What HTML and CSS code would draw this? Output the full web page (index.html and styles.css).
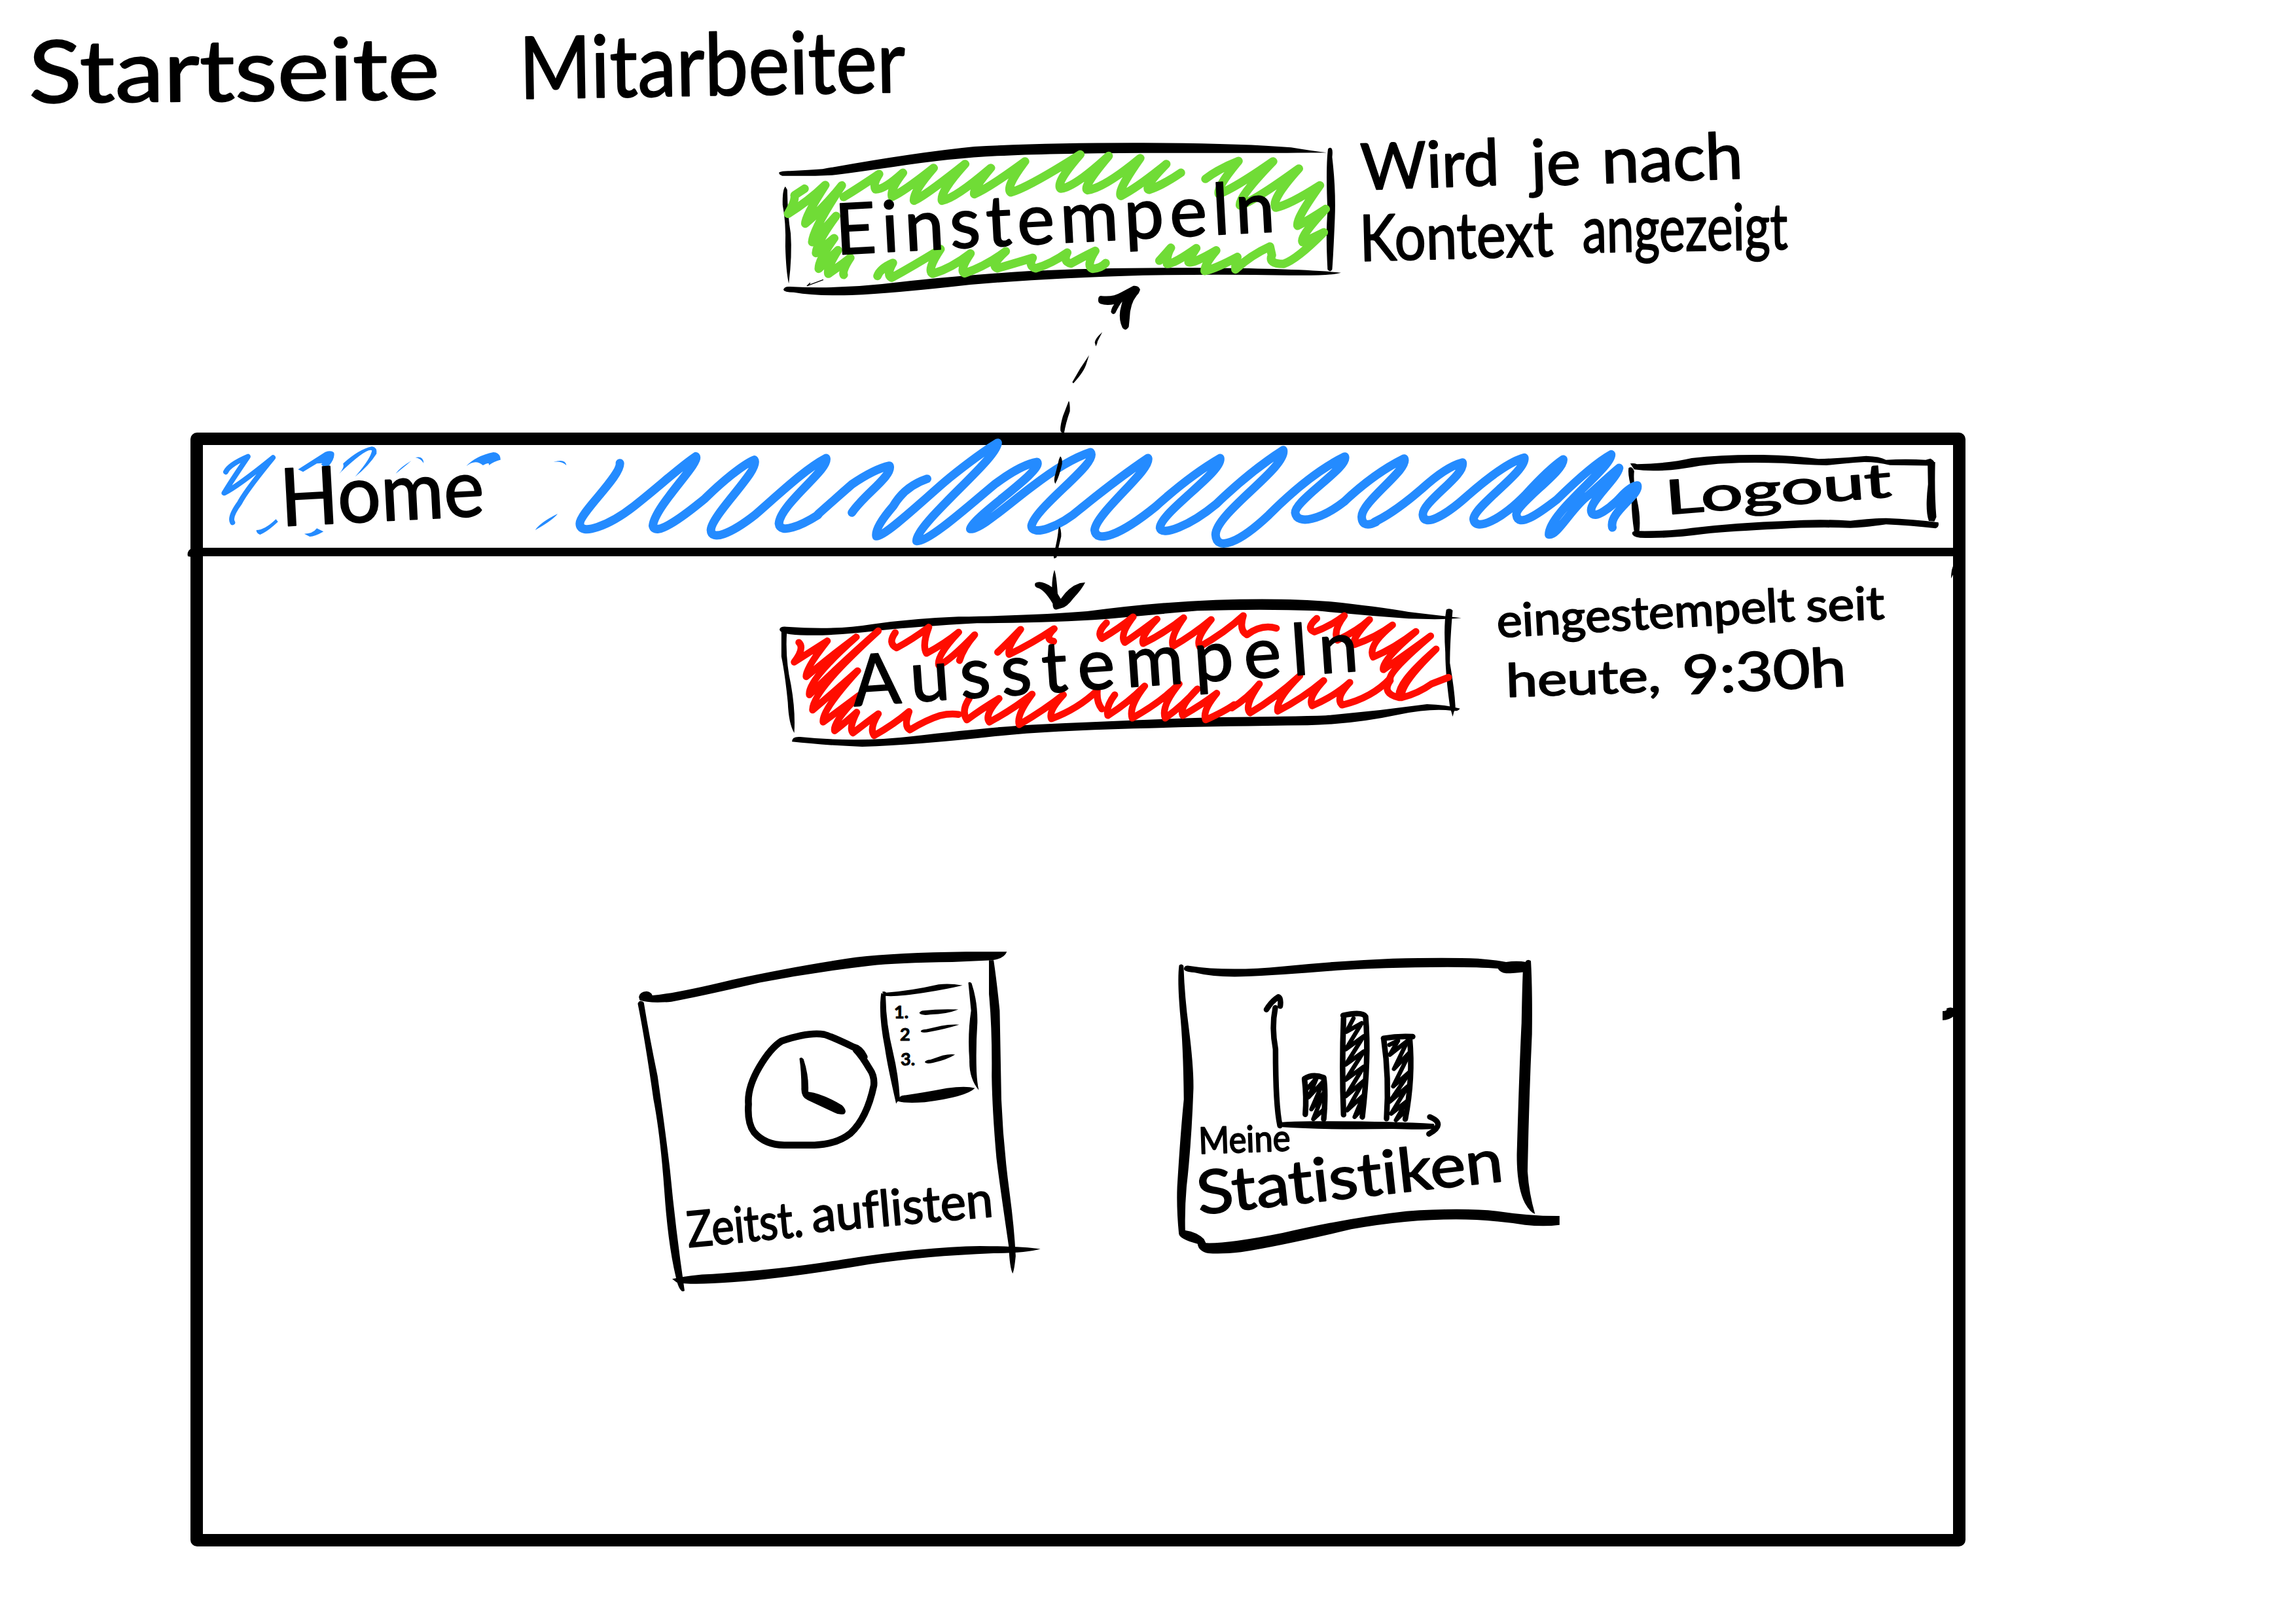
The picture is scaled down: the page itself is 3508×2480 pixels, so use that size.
FILE: index.html
```html
<!DOCTYPE html>
<html lang="de">
<head>
<meta charset="utf-8">
<title>Startseite Mitarbeiter</title>
<link rel="stylesheet" href="styles.css">
</head>
<body>
<main class="page">
  <h1 class="title">
    <svg class="art" viewBox="0 0 3508 190">
      <text class="t-title" transform="translate(44 157) rotate(-.5)" textLength="628" lengthAdjust="spacingAndGlyphs">Startseite</text>
      <text class="t-title" transform="translate(794 151) rotate(-1)" textLength="590" lengthAdjust="spacingAndGlyphs">Mitarbeiter</text>
    </svg>
  </h1>

  <section class="context">
    <button class="sketch-button clock-in">
      <svg class="art" viewBox="1160 190 880 300">
        <g transform="translate(1160 190) scale(.58673 .33333)">
          <path d="M52 220Q60 213 80 214Q130 210 165 205Q400 130 560 102Q750 84 1000 85Q1250 86 1385 106Q1440 122 1478 130Q1430 130 1375 131L1000 131Q750 133 620 145Q500 155 350 195Q230 225 190 233Q130 238 60 236Q50 230 52 220Z"/>
          <path d="M68 285Q60 300 61 370Q70 450 68 560Q70 680 77 730Q86 600 82 500Q74 420 73 300Z"/>
          <path d="M63 758Q65 742 80 744Q200 755 320 732Q500 695 700 673Q900 655 1140 658Q1400 660 1515 680Q1490 695 1380 692Q1200 686 1000 692Q750 705 550 735Q350 775 240 783Q150 788 90 770Q65 770 63 758Z"/>
          <path d="M1487 107Q1495 107 1492 150Q1502 300 1499 430Q1495 600 1492 665Q1487 680 1480 665Q1475 500 1480 400Q1475 200 1481 115Q1482 107 1487 107Z"/>
          <path class="line hair" d="M166 713L125 740L132 728"/>
          <g class="line green">
            <path d="M220 333Q260 290 312 228Q295 275 303 298Q325 300 374 222Q340 300 346 332Q375 310 454 200Q400 310 403 350Q430 330 536 182Q470 310 476 350Q510 340 603 200Q555 300 560 320Q600 290 692 170Q640 290 655 312Q700 290 836 138Q770 270 785 295Q820 290 910 145Q840 290 855 302Q900 290 992 155Q930 310 942 328Q985 290 1060 182Q1000 290 1015 300Q1050 280 1098 222"/>
            <path d="M1162 250Q1200 200 1248 168Q1190 290 1197 320Q1240 290 1338 170Q1245 340 1252 372Q1290 350 1405 203Q1330 350 1345 382Q1380 370 1460 280Q1395 440 1402 465Q1430 440 1475 388Q1405 520 1415 540Q1430 530 1470 495Q1400 620 1365 640Q1325 640 1335 600L1330 560Q1280 600 1240 665Q1240 620 1245 608Q1190 660 1160 672Q1160 640 1190 578Q1130 640 1118 632Q1125 600 1138 568Q1080 640 1062 640Q1060 600 1072 566Q1060 590 1042 625"/>
            <path d="M308 695Q315 660 348 635Q330 690 345 703Q400 650 472 572Q435 670 452 685Q500 660 550 592Q520 670 535 683Q590 650 642 582Q600 650 620 660Q660 640 712 612Q700 650 720 660Q760 640 802 588Q790 630 812 638Q840 610 875 580Q850 650 868 662Q890 660 902 636"/>
            <path d="M118 295L92 325Q95 350 75 410Q130 350 172 278Q120 420 120 455Q170 380 215 280Q140 480 138 540Q170 480 200 420Q150 540 148 590Q170 560 195 522Q155 620 155 662Q180 620 205 577Q175 660 180 685Q210 650 237 612Q215 670 220 690"/>
          </g>
        </g>
        <text class="t-button" transform="translate(1278 389) rotate(-3)" textLength="672">Einstempeln</text>
      </svg>
    </button>
    <p class="context-note">
      <svg class="art" viewBox="2040 190 760 300">
        <g class="t-note">
          <text transform="translate(2080 290) rotate(-2)" textLength="212" lengthAdjust="spacingAndGlyphs">Wird</text>
          <text transform="translate(2340 284) rotate(-2)" textLength="76" lengthAdjust="spacingAndGlyphs">je</text>
          <text transform="translate(2448 280) rotate(-2)" textLength="216" lengthAdjust="spacingAndGlyphs">nach</text>
          <text transform="translate(2078 399) rotate(-1.5)" textLength="296" lengthAdjust="spacingAndGlyphs">Kontext</text>
          <text transform="translate(2418 386) rotate(-1)" textLength="314" lengthAdjust="spacingAndGlyphs">angezeigt</text>
        </g>
      </svg>
    </p>
  </section>

  <section class="window">
    <header class="bar">
      <div class="bar-title">
        <svg class="art" viewBox="310 680 2160 157">
          <path d="M292 838Q285 843 287 850L292 851Z"/>
          <g transform="translate(280 640) scale(.63776 .33333)">
            <g class="blue">
              <path d="M275 232L340 152Q355 142 361 155Q365 185 342 230L330 208Q340 200 320 205L287 243Z"/>
              <path d="M383 205Q420 140 452 127Q465 130 463 160Q445 215 412 265Q450 180 452 145Q440 130 373 252Q387 225 383 205Z"/>
              <path d="M509 251Q520 222 546 193Q530 220 509 251Z"/>
              <path d="M556 177Q575 168 576 203Q568 180 556 177Z"/>
              <path d="M678 217Q700 170 743 153Q760 155 760 188Q745 195 732 213Q735 195 718 213Q700 182 678 217Z"/>
              <path d="M887 198Q915 180 918 213Q905 192 887 198Z"/>
              <path d="M843 510Q855 475 897 435Q885 465 843 510Z"/>
              <path d="M175 510Q195 510 222 460L227 472Q200 520 184 531Q175 525 175 510Z"/>
              <path d="M290 527Q310 527 320 502L336 517Q315 540 303 540Z"/>
            </g>
            <path class="line blue-line thin" d="M102 243Q110 210 155 173Q110 300 98 340Q130 310 215 178Q150 330 135 385Q110 450 118 475"/>
            <path class="line blue-line" d="M1046 203C1050 260 950 430 950 480C950 540 1020 490 1080 400C1140 310 1190 220 1228 172C1240 200 1130 400 1125 490C1130 540 1190 460 1250 365C1290 290 1340 210 1368 188C1385 230 1265 440 1264 510C1265 560 1310 530 1370 440C1430 340 1490 230 1540 180C1550 230 1430 390 1427 480C1430 530 1480 490 1521 440"/>
          </g>
          <g transform="translate(1250 640) scale(.57398 .33333)">
            <path class="line blue-line" d="M0 437Q50 360 90 300Q150 230 190 215C200 260 120 350 90 430"/>
            <path class="line blue-line" d="M290 275Q230 310 200 400Q150 500 155 538C180 540 300 340 350 270Q430 160 478 110C480 180 260 480 262 560C290 570 400 400 470 300Q540 210 583 198C600 240 410 450 405 505C430 510 500 400 570 310Q660 190 725 153C750 200 580 400 568 490C568 540 640 500 700 410Q800 270 878 180C890 230 740 430 736 510C740 570 800 540 900 400Q990 260 1070 180C1080 240 910 430 910 500C915 540 990 490 1060 390Q1150 240 1238 143C1250 220 1060 430 1058 530C1060 610 1120 570 1200 440Q1310 250 1402 173C1415 220 1270 370 1270 430C1275 490 1340 460 1400 380Q1480 250 1560 182C1575 230 1445 380 1447 450C1448 490 1465 490 1485 473"/>
          </g>
          <g transform="translate(2100 640) scale(.60587 .33333)">
            <path class="line blue-line" d="M0 473Q50 430 120 320Q180 220 222 200C230 260 120 380 122 440C125 500 180 440 230 360Q330 200 378 178C385 240 250 400 250 460C255 520 320 460 380 350Q440 230 476 186C480 240 355 390 358 440C362 500 410 440 460 370Q550 210 597 163C600 220 440 430 440 530C460 540 500 400 540 350Q600 250 617 225C610 280 540 380 547 425C552 470 600 400 620 360Q645 310 663 305C670 350 590 430 600 498"/>
          </g>
          <text class="t-home" transform="translate(430 804) rotate(-3)" textLength="312" lengthAdjust="spacingAndGlyphs">Home</text>
        </svg>
      </div>
      <button class="sketch-button logout">
        <svg class="art" viewBox="2470 680 514 157">
          <g transform="translate(2100 640) scale(.60587 .33333)">
            <path d="M645 205Q655 202 662 208Q740 205 800 180Q880 163 980 165Q1060 168 1120 184Q1180 180 1240 170Q1275 172 1290 188Q1340 182 1390 188L1402 182Q1418 198 1410 215Q1340 212 1300 212Q1270 198 1235 198Q1180 205 1140 213Q1080 210 1030 203Q900 195 820 215Q720 250 655 232Z"/>
            <path d="M641 225Q650 215 655 240Q652 290 662 370Q672 450 668 515L655 518Q645 400 650 330Q638 260 641 225Z"/>
            <path d="M1395 200L1414 198Q1412 350 1417 450L1412 470L1398 468Q1388 420 1396 300Z"/>
            <path d="M650 522Q652 512 665 514Q740 516 800 500Q920 475 1040 468Q1120 458 1200 467Q1260 455 1290 455Q1360 460 1422 475Q1425 495 1415 502Q1350 488 1290 484Q1230 500 1200 500Q1100 495 1020 505Q900 515 830 528Q740 550 670 545Q648 540 650 522Z"/>
          </g>
          <text class="t-logout" transform="translate(2546 786) rotate(-4.5)" textLength="346" lengthAdjust="spacingAndGlyphs">Logout</text>
        </svg>
      </button>
    </header>

    <section class="status">
      <button class="sketch-button clock-out">
        <svg class="art" viewBox="1170 850 1080 310">
          <g transform="translate(1170 880) scale(.70153 .33333)">
            <path d="M30 245Q32 230 45 233Q150 250 230 222Q320 195 420 187Q600 180 700 162Q850 120 980 110Q1130 100 1230 118Q1330 140 1400 165Q1460 180 1515 193Q1480 202 1400 196Q1300 180 1200 160Q1080 150 940 160Q830 180 740 198Q620 215 460 217Q330 232 250 250Q150 275 90 272Q30 270 30 245Z"/>
            <path d="M34 255L46 255Q42 380 55 500Q65 620 62 720Q50 680 48 580Q42 450 34 370Z"/>
            <path d="M57 760Q57 735 75 738Q200 765 320 735Q500 690 600 680Q800 660 980 648Q1150 645 1220 640Q1330 620 1440 588Q1480 590 1512 608Q1508 622 1495 618Q1450 605 1380 635Q1280 680 1180 685Q950 690 800 700Q620 710 500 735Q330 775 210 783Q120 775 57 760Z"/>
            <path d="M1482 155Q1490 145 1496 158Q1490 300 1490 400Q1500 520 1502 600L1496 645L1490 600Q1480 450 1480 350Q1476 230 1482 155Z"/>
            <g class="line red">
              <path d="M72 305Q85 330 62 395Q110 330 134 298Q85 430 88 462Q140 370 197 280Q90 480 95 545Q160 410 245 252Q100 530 102 615Q160 510 200 435Q120 620 125 670Q170 600 203 548Q145 670 150 710Q180 660 198 625Q180 700 190 720Q220 670 245 632Q225 700 236 732Q280 680 312 622Q300 690 314 706Q350 660 380 640Q400 630 420 635"/>
              <path d="M282 260Q265 310 285 330Q320 290 355 235Q340 320 350 355Q390 310 420 258Q370 370 377 410Q400 390 455 270Q430 330 422 388"/>
              <path d="M505 350Q530 300 555 245Q525 330 530 360Q580 310 628 242Q605 290 627 300"/>
              <path d="M742 215Q720 260 732 287Q770 240 800 188Q770 270 782 305Q820 250 852 198Q815 280 822 310Q870 260 910 192Q880 280 887 322Q930 270 970 200Q935 290 945 325Q1000 260 1040 182Q1030 250 1048 270Q1080 220 1112 240"/>
              <path d="M1200 195Q1175 240 1195 257Q1230 230 1260 182Q1235 250 1245 295Q1290 250 1315 200Q1275 290 1282 315Q1330 280 1365 225Q1310 320 1323 372Q1370 330 1416 255Q1340 390 1345 430Q1400 350 1448 275Q1350 450 1360 480Q1340 540 1380 558Q1370 500 1460 335Q1380 500 1385 558Q1420 540 1450 495L1487 465"/>
              <path d="M443 562Q425 620 438 660Q470 610 508 562Q475 640 487 670Q540 610 580 542Q545 640 552 682Q610 610 648 545Q615 620 622 655Q680 610 722 525Q720 580 732 610"/>
              <path d="M760 545Q740 600 745 640Q790 580 825 505Q790 600 798 652Q860 580 900 495Q860 600 870 652Q910 590 940 518Q900 600 908 640Q950 590 982 538Q950 620 958 660Q1000 620 1020 590L1015 605Q1050 560 1075 495Q1040 600 1055 628Q1110 560 1163 458Q1110 570 1115 620Q1170 560 1215 480Q1180 560 1190 595Q1240 550 1272 488Q1240 560 1255 592Q1320 560 1360 470"/>
            </g>
          </g>
          <text class="t-button" transform="translate(1305 1079) rotate(-4)" textLength="774">Ausstempeln</text>
        </svg>
      </button>
      <p class="status-note">
        <svg class="art" viewBox="2250 850 734 310">
          <path d="M2986 862Q2981 868 2981 884L2986 874Z"/>
          <g class="t-status">
            <text transform="translate(2288 974) rotate(-3.2)" textLength="456" lengthAdjust="spacingAndGlyphs">eingestempelt</text>
            <text transform="translate(2760 950) rotate(-2)" textLength="120" lengthAdjust="spacingAndGlyphs">seit</text>
            <text transform="translate(2302 1065) rotate(-2)" textLength="236" lengthAdjust="spacingAndGlyphs">heute,</text>
          </g>
          <text class="t-time" transform="translate(2572 1061) rotate(-3)" textLength="250" lengthAdjust="spacingAndGlyphs">9:30h</text>
        </svg>
      </p>
    </section>

    <nav class="cards">
      <a class="card">
        <svg class="art" viewBox="950 1430 660 560">
          <g transform="translate(950 1430) scale(.42087 .35714)">
            <path d="M62 262Q65 238 90 237Q108 240 111 255Q200 245 400 188Q650 125 850 92Q1000 72 1250 68L1398 68Q1388 98 1345 104L1200 112Q1000 115 900 128Q700 155 500 200Q300 255 180 282Q100 290 65 275Z"/>
            <path d="M58 290Q65 270 80 285Q100 430 130 600Q160 850 175 1000Q195 1250 228 1518Q215 1530 203 1490Q170 1350 155 1100Q140 850 115 700Q85 450 58 290Z"/>
            <path d="M1333 104L1350 104Q1362 200 1372 320Q1375 500 1378 700Q1385 900 1408 1100Q1425 1250 1430 1370Q1425 1430 1419 1445Q1408 1420 1405 1330Q1370 1050 1360 950Q1345 750 1343 600Q1345 400 1333 250Z"/>
            <path d="M183 1468Q250 1450 330 1447Q600 1425 800 1385Q1100 1330 1300 1327Q1450 1328 1520 1340Q1470 1357 1350 1358Q1100 1370 900 1405Q600 1465 400 1482Q250 1495 200 1483Z"/>
            <path class="line clock" d="M880 518Q865 482 840 475Q760 430 735 422Q680 410 580 450Q540 480 500 560Q455 650 460 720Q455 800 480 840Q520 895 590 895L700 895Q780 892 830 845Q890 780 915 640Q918 600 900 570Q870 510 850 487"/>
            <path d="M645 525Q652 515 660 528Q680 600 677 667Q730 675 800 725Q820 750 808 762Q790 768 770 755L675 703Q650 690 652 650Q652 580 645 525Z"/>
            <path d="M945 240Q955 235 960 243Q1050 235 1150 208Q1190 202 1237 212Q1180 228 1100 243Q1000 262 955 257Z"/>
            <path d="M995 715Q1005 680 1030 682Q1100 670 1180 652Q1250 640 1282 652Q1250 690 1100 712Q1030 718 1003 708Z"/>
            <path d="M942 245L958 250Q958 370 985 500Q1005 600 1009 690L996 718Q965 560 955 480Q930 330 942 245Z"/>
            <path d="M1258 200Q1265 195 1270 203Q1292 280 1291 370Q1285 480 1288 580Q1290 630 1296 660Q1260 610 1262 530Q1255 420 1268 320Z"/>
            <path d="M1080 330Q1085 320 1095 320Q1150 312 1222 315Q1180 335 1120 337Q1085 342 1080 330Z"/>
            <path d="M1085 408Q1090 400 1105 400L1160 385Q1190 378 1225 380Q1170 400 1120 410Q1088 418 1085 408Z"/>
            <path d="M1100 540Q1105 530 1120 530L1165 512Q1190 505 1210 508Q1180 530 1130 543Q1105 550 1100 540Z"/>
          </g>
          <g class="t-list">
            <text x="1366" y="1556">1.</text>
            <text x="1375" y="1590">2</text>
            <text x="1376" y="1628">3.</text>
          </g>
          <g class="t-card">
            <text transform="translate(1052 1906) rotate(-5.5)" textLength="178" lengthAdjust="spacingAndGlyphs">Zeitst.</text>
            <text transform="translate(1242 1883) rotate(-5)" textLength="278" lengthAdjust="spacingAndGlyphs">auflisten</text>
          </g>
        </svg>
      </a>
      <a class="card">
        <svg class="art" viewBox="1770 1430 660 560">
          <g transform="translate(1770 1430) scale(.42087 .33333)">
            <path d="M92 150Q95 135 110 137Q250 165 450 140Q650 115 850 104Q1050 98 1160 104Q1220 110 1262 120Q1300 112 1335 120L1335 165Q1290 172 1262 172Q1240 168 1232 150Q1170 143 1050 143Q800 145 650 158Q450 180 300 187Q200 190 130 168Q92 165 92 150Z"/>
            <path d="M75 135Q83 125 91 137Q95 280 110 420Q128 600 127 700Q120 950 102 1150Q95 1250 97 1350Q140 1358 165 1390L172 1408Q250 1412 450 1362Q700 1290 900 1262Q1100 1245 1230 1262Q1350 1285 1456 1284L1456 1325Q1400 1335 1330 1325Q1200 1300 1080 1300Q900 1300 700 1345Q450 1420 300 1450Q230 1460 180 1455Q145 1445 142 1412Q75 1390 74 1365Q65 1250 68 1150Q80 900 92 750Q90 500 78 350Q68 200 75 135Z"/>
            <path d="M1334 115Q1342 105 1352 115Q1358 250 1356 450Q1345 750 1340 1080Q1345 1180 1367 1275Q1350 1270 1330 1225Q1300 1150 1301 1000Q1310 600 1318 400Q1320 250 1323 160Z"/>
            <path d="M441 855Q500 848 600 850Q850 850 1000 862L1005 885Q950 890 850 885Q600 890 450 877Z"/>
            <g class="line chart">
              <path d="M424 330Q410 420 425 520Q425 780 441 870"/>
              <path d="M985 830Q1046 862 982 908"/>
              <path d="M392 338Q410 300 435 280Q446 285 442 322"/>
              <path d="M533 818Q538 740 530 655Q560 630 600 650Q608 720 600 840"/>
              <path d="M672 820Q665 600 672 378M670 365Q740 345 752 370Q765 560 740 830"/>
              <path d="M828 838Q838 650 818 475M817 470Q870 458 923 462M912 470Q925 650 896 840"/>
            </g>
            <g class="line hatch">
              <path d="M540 700L575 650L545 740L600 665L555 795L600 720L562 840L605 790"/>
              <path d="M708 378L682 440L738 400L680 520L745 460L680 590L745 530L680 660L745 600L680 735L745 665L685 800L745 730L712 830L742 790"/>
              <path d="M838 500L870 480L840 545L905 480L855 610L915 530L852 690L915 620L840 760L905 690L845 815L900 760L862 845L890 810"/>
            </g>
          </g>
          <text class="t-meine" transform="translate(1832 1763) rotate(-2)" textLength="140" lengthAdjust="spacingAndGlyphs">Meine</text>
          <text class="t-stat" transform="translate(1832 1856) rotate(-6.3)" textLength="470" lengthAdjust="spacingAndGlyphs">Statistiken</text>
          <path d="M2968 1545Q2976 1545 2974 1541Q2980 1538 2986 1541L2986 1552Q2978 1559 2968 1559Z"/>
        </svg>
      </a>
    </nav>
  </section>

  <svg class="switch-arrow" viewBox="0 0 780 1568" preserveAspectRatio="none">
    <path d="M414 160Q415 145 430 146Q480 152 520 130L575 103Q600 100 606 120Q602 135 590 145Q560 180 558 240L554 278Q540 300 525 283Q508 250 514 210L524 170Q510 185 492 220Q480 230 472 215Q475 195 487 182Q450 188 425 180Q412 175 414 160Z"/>
    <path d="M432 302Q402 325 398 345L403 362Q410 350 411 340Z"/>
    <path d="M372 400Q330 455 295 515L300 520Q350 470 360 435Z"/>
    <path d="M279 595Q285 605 284 640Q265 690 257 735L243 728Q235 715 252 660Z"/>
    <path d="M240 832Q250 840 248 865Q235 920 217 950Q210 940 214 920Q228 870 234 845Z"/>
    <path d="M236 1132Q245 1145 244 1175Q232 1220 223 1265L212 1270Q205 1260 218 1220Q230 1170 231 1145Z"/>
    <path d="M213 1318Q222 1340 228 1420L242 1442Q280 1390 330 1375L354 1372Q340 1400 300 1440Q270 1478 245 1482L222 1488Q205 1490 205 1462Q165 1400 135 1395Q118 1390 125 1375Q150 1360 202 1392Q202 1350 213 1318Z"/>
  </svg>
</main>
</body>
</html>
```
FILE: styles.css
```css
* { box-sizing: border-box; }

body {
  margin: 0;
  background: #fff;
  color: #000;
  font-family: Lato, "Open Sans", sans-serif;
  font-variant-ligatures: none;
}

.page {
  position: relative;
  width: 3508px;
  height: 2480px;
  overflow: hidden;
}

h1, p { margin: 0; }

.art {
  display: block;
  width: 100%;
  height: 100%;
  overflow: visible;
}

.sketch-button {
  padding: 0;
  border: 0;
  background: none;
  color: inherit;
  font: inherit;
}

/* Page title and the context-dependent button above the window */
.title { height: 190px; font-weight: 400; }
.context {
  display: flex;
  height: 300px;
  margin-bottom: 171px;
  padding-left: 1160px;
}
.clock-in { width: 880px; }
.context-note { width: 760px; }

/* Application window */
.window {
  width: 2712px;
  height: 1702px;
  margin-left: 291px;
  border: 19px solid #000;
  border-radius: 10px;
}
.bar {
  display: flex;
  height: 170px;
  border-bottom: 13px solid #000;
}
.bar-title { position: relative; z-index: 1; width: 2160px; }
.logout { width: 514px; }

.status {
  display: flex;
  height: 310px;
  padding-left: 860px;
}
.clock-out { width: 1080px; }
.status-note { width: 734px; }

.cards {
  display: flex;
  gap: 160px;
  margin-top: 270px;
  padding-left: 640px;
}
.card { width: 660px; height: 560px; }

.switch-arrow {
  position: absolute;
  z-index: 2;
  left: 1540px;
  top: 400px;
  width: 260px;
  height: 560px;
}

/* Pen strokes */
.line { fill: none; stroke: #000; stroke-linecap: round; stroke-linejoin: round; }
.line, .line path { vector-effect: non-scaling-stroke; }
.hair { stroke-width: 1.5px; }
.green { stroke: #70dc36; stroke-width: 13px; }
.red { stroke: #ff0d00; stroke-width: 10.5px; }
.blue { fill: #248bff; }
.blue-line { stroke: #248bff; stroke-width: 13px; }
.thin { stroke-width: 8px; }
.clock { stroke-width: 10.5px; }
.chart { stroke-width: 8.5px; }
.hatch { stroke-width: 6.5px; }

/* Lettering: a thin outline gives the letters the weight of a felt pen */
text { stroke: #000; stroke-width: 2px; stroke-linejoin: round; }
.t-title { font-size: 132px; }
.t-button { font-size: 108px; }
.t-note { font-size: 98px; }
.t-home { font-size: 122px; }
.t-logout { font-size: 72px; }
.t-status { font-size: 70px; }
.t-time { font-size: 82px; }
.t-list { font-size: 27px; font-weight: 700; }
.t-list text { stroke-width: 1px; }
.t-card { font-size: 76px; }
.t-meine { font-size: 56px; }
.t-stat { font-size: 92px; }
```
